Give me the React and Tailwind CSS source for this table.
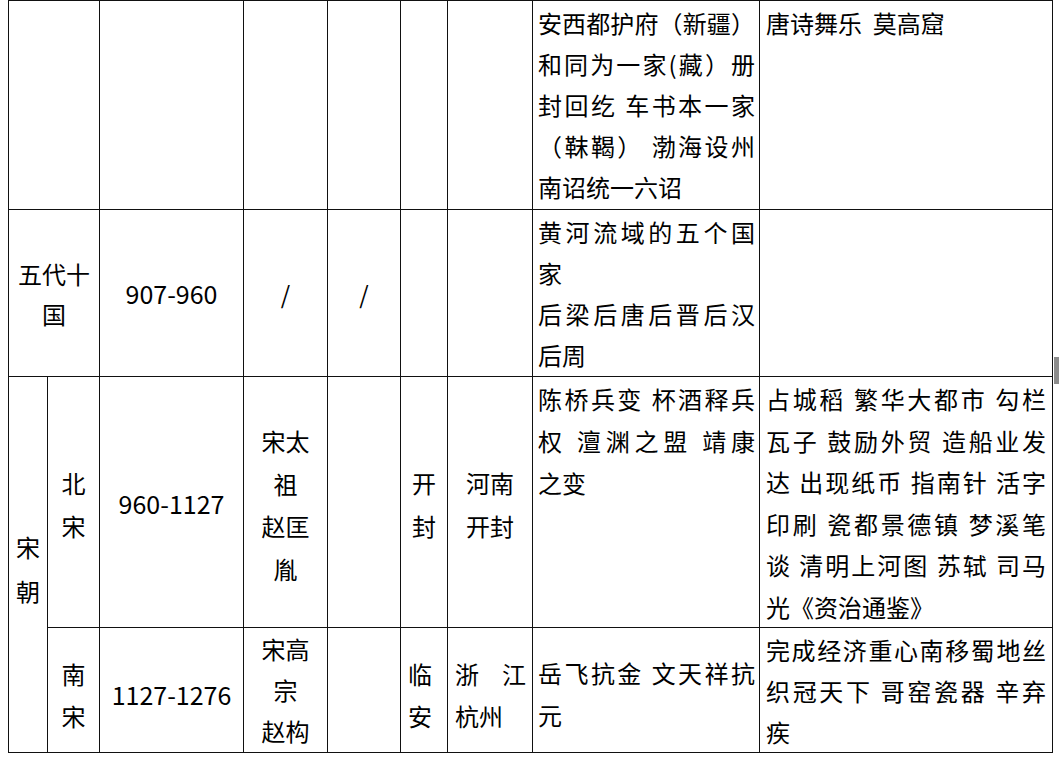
import React from 'react'

const JUST = 'text-justify [text-align-last:justify]'

// each line: [text, justified?]
function Lines({ lines, className = '' }) {
  return (
    <div className={className}>
      {lines.map(([t, j], i) => (
        <div key={i} className={j ? JUST : ''}>{t}</div>
      ))}
    </div>
  )
}

const cell = 'border border-[#111] p-0'

export default function App() {
  return (
    <div className="relative w-[1059px] h-[757px] bg-white overflow-hidden font-['Noto_Sans_CJK_SC','Noto_Sans_CJK_TC',sans-serif] text-[24px] leading-[41px] text-black">
      <table className="ml-[8px] border-collapse table-fixed w-[1044px]">
        <colgroup>
          <col className="w-[39px]" />
          <col className="w-[52px]" />
          <col className="w-[144px]" />
          <col className="w-[84px]" />
          <col className="w-[73px]" />
          <col className="w-[47px]" />
          <col className="w-[85px]" />
          <col className="w-[227px]" />
          <col className="w-[293px]" />
        </colgroup>
        <tbody>
          {/* 唐 (continued) */}
          <tr className="h-[209px]">
            <td colSpan={2} className={cell}></td>
            <td className={cell}></td>
            <td className={cell}></td>
            <td className={cell}></td>
            <td className={cell}></td>
            <td className={cell}></td>
            <td className={`${cell} align-top pl-[5px] pr-[4px] pt-[1px]`}>
              <Lines
                lines={[
                  ['安西都护府（新疆）', true],
                  ['和同为一家(藏）册', true],
                  ['封回纥 车书本一家', true],
                  ['（靺鞨） 渤海设州', true],
                  ['南诏统一六诏', false],
                ]}
              />
            </td>
            <td className={`${cell} align-top pl-[6px] pr-[5px] pt-[1px]`}>
              <div className="whitespace-pre">唐诗舞乐  莫高窟</div>
            </td>
          </tr>

          {/* 五代十国 */}
          <tr className="h-[167px]">
            <td colSpan={2} className={`${cell} align-middle text-center leading-[40px] pt-[2px]`}>
              <Lines lines={[['五代十'], ['国']]} />
            </td>
            <td className={`${cell} align-middle text-center text-[25px]`}>907-960</td>
            <td className={`${cell} align-middle text-center`}>/</td>
            <td className={`${cell} align-middle text-center`}>/</td>
            <td className={cell}></td>
            <td className={cell}></td>
            <td className={`${cell} align-top pl-[5px] pr-[4px] pt-[1px]`}>
              <Lines
                lines={[
                  ['黄河流域的五个国', true],
                  ['家', false],
                  ['后梁后唐后晋后汉', true],
                  ['后周', false],
                ]}
              />
            </td>
            <td className={cell}></td>
          </tr>

          {/* 北宋 */}
          <tr className="h-[251px]">
            <td rowSpan={2} className={`${cell} align-middle text-center leading-[44px] pt-[8px]`}>
              <Lines lines={[['宋'], ['朝']]} />
            </td>
            <td className={`${cell} align-middle text-center leading-[42.5px] pt-[5px]`}>
              <Lines lines={[['北'], ['宋']]} />
            </td>
            <td className={`${cell} align-middle text-center text-[25px] pt-[2px]`}>960-1127</td>
            <td className={`${cell} align-middle text-center leading-[42.5px] pt-[6px]`}>
              <Lines lines={[['宋太'], ['祖'], ['赵匡'], ['胤']]} />
            </td>
            <td className={cell}></td>
            <td className={`${cell} align-middle text-center leading-[42.5px] pt-[5px]`}>
              <Lines lines={[['开'], ['封']]} />
            </td>
            <td className={`${cell} align-middle text-center leading-[42.5px] pt-[5px]`}>
              <Lines lines={[['河南'], ['开封']]} />
            </td>
            <td className={`${cell} align-top pl-[5px] pr-[4px] pt-[1px] leading-[42px]`}>
              <Lines
                lines={[
                  ['陈桥兵变 杯酒释兵', true],
                  ['权 澶渊之盟 靖康', true],
                  ['之变', false],
                ]}
              />
            </td>
            <td className={`${cell} align-top pl-[6px] pr-[6px] pt-[1px] leading-[41.5px]`}>
              <Lines
                lines={[
                  ['占城稻 繁华大都市 勾栏', true],
                  ['瓦子 鼓励外贸 造船业发', true],
                  ['达 出现纸币 指南针 活字', true],
                  ['印刷 瓷都景德镇 梦溪笔', true],
                  ['谈 清明上河图 苏轼 司马', true],
                  ['光《资治通鉴》', false],
                ]}
              />
            </td>
          </tr>

          {/* 南宋 */}
          <tr className="h-[124px]">
            <td className={`${cell} align-middle text-center leading-[42px] pt-[10px]`}>
              <Lines lines={[['南'], ['宋']]} />
            </td>
            <td className={`${cell} align-middle text-center text-[25px] pt-[8px]`}>1127-1276</td>
            <td className={`${cell} align-top text-center leading-[41px]`}>
              <Lines lines={[['宋高'], ['宗'], ['赵构']]} />
            </td>
            <td className={cell}></td>
            <td className={`${cell} align-middle pl-[7px] leading-[42px] pt-[10px]`}>
              <Lines lines={[['临'], ['安']]} />
            </td>
            <td className={`${cell} align-middle pl-[7px] pr-[6px] leading-[42px] pt-[10px]`}>
              <Lines lines={[['浙江', true], ['杭州', false]]} />
            </td>
            <td className={`${cell} align-middle pl-[5px] pr-[4px] leading-[42px] pt-[8px]`}>
              <Lines
                lines={[
                  ['岳飞抗金 文天祥抗', true],
                  ['元', false],
                ]}
              />
            </td>
            <td className={`${cell} align-top pl-[6px] pr-[6px] pt-[1px] leading-[41px]`}>
              <Lines
                lines={[
                  ['完成经济重心南移蜀地丝', true],
                  ['织冠天下 哥窑瓷器 辛弃', true],
                  ['疾', false],
                ]}
              />
            </td>
          </tr>
        </tbody>
      </table>

      {/* scroll handle sliver at the right edge */}
      <div className="absolute left-[1054px] top-[357px] w-[5px] h-[27px] bg-[#8c8c8c]" />
    </div>
  )
}
